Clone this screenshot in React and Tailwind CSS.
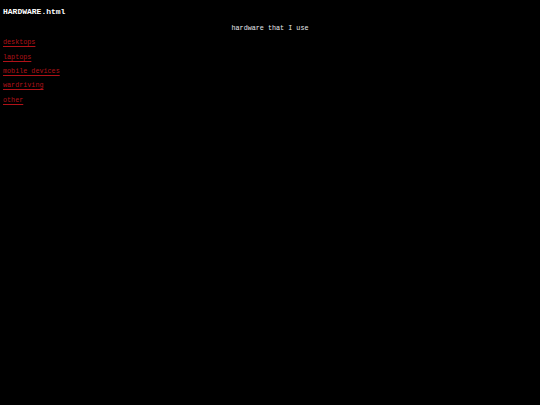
export default function App() {
  const links = ['desktops', 'laptops', 'mobile devices', 'wardriving', 'other'];

  return (
    <div className="min-h-screen bg-black px-[3px] pt-[7px] text-white font-['Liberation_Mono',monospace]">
      <h1 className="text-[8px] leading-[10px] font-bold">HARDWARE.html</h1>
      <p className="mt-[6px] text-center text-[6.75px] leading-[10px] text-gray-200">hardware that I use</p>
      <ul className="mt-[2px]">
        {links.map(link => (
          <li key={link} className="h-[14.4px] flex items-center">
            <a href="#" className="text-[6.75px] leading-[10px] text-[#b01218] underline underline-offset-[1.5px]">{link}</a>
          </li>
        ))}
      </ul>
    </div>
  );
}
